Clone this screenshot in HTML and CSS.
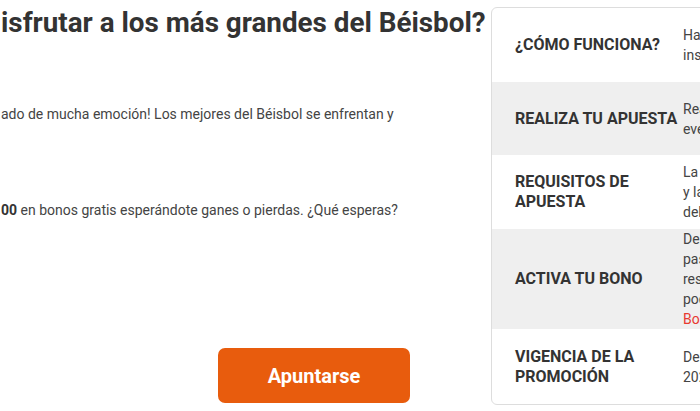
FILE: index.html
```html
<!DOCTYPE html>
<html lang="es">
<head>
<meta charset="utf-8">
<title>Béisbol</title>
<link rel="stylesheet" href="styles.css">
</head>
<body>
<div class="page">
  <section class="intro">
    <h1 class="title">isfrutar a los más grandes del Béisbol?</h1>
    <p class="lead">ado de mucha emoción! Los mejores del Béisbol se enfrentan y</p>
    <p class="lead second"><strong>00</strong> en bonos gratis esperándote ganes o pierdas. ¿Qué esperas?</p>
    <a class="cta" href="#">Apuntarse</a>
  </section>
  <aside class="card">
    <div class="row">
      <div class="label">¿CÓMO FUNCIONA?</div>
      <div class="desc">Haz clic en el botón Apuntarse y completa tu<br>inscripción a la promoción.</div>
    </div>
    <div class="row alt">
      <div class="label">REALIZA TU APUESTA</div>
      <div class="desc">Realiza tu apuesta en cualquier mercado del<br>evento seleccionado.</div>
    </div>
    <div class="row">
      <div class="label">REQUISITOS DE APUESTA</div>
      <div class="desc">La apuesta debe ser de cuota mínima 1.50<br>y la liquidación se realizará al finalizar<br>del evento.</div>
    </div>
    <div class="row alt tall">
      <div class="label">ACTIVA TU BONO</div>
      <div class="desc">Después de liquidada tu apuesta, en los próximos<br>pasos recibirás tu bono gratis sin importar el<br>resultado. Para activarlo en la sección,<br>podrás encontrarlo en tu perfil, en<br><a class="red" href="#">Bonos y Promociones</a>.</div>
    </div>
    <div class="row">
      <div class="label">VIGENCIA DE LA PROMOCIÓN</div>
      <div class="desc">Del 1 de octubre al 31 de octubre de<br>2023.</div>
    </div>
  </aside>
</div>
</body>
</html>
```
FILE: styles.css
```css
html, body {
  margin: 0;
  padding: 0;
  background: #ffffff;
  overflow: hidden;
}
body {
  font-family: Roboto, "Liberation Sans", sans-serif;
  color: #333333;
  width: 700px;
  height: 411px;
}
.page {
  display: flex;
  align-items: flex-start;
  width: 700px;
  height: 411px;
  overflow: hidden;
}
.intro {
  flex: 0 0 491px;
  min-width: 0;
  display: flex;
  flex-direction: column;
  align-items: flex-start;
  padding-left: 1px;
  box-sizing: border-box;
}
.title {
  margin: 5px 0 0 0;
  font-size: 27.8px;
  line-height: 36px;
  font-weight: 700;
  color: #333333;
  white-space: nowrap;
}
.lead {
  margin: 63px 0 0 0;
  font-size: 14px;
  line-height: 20px;
  color: #444444;
  white-space: nowrap;
}
.lead.second {
  margin-top: 76px;
}
.lead strong {
  font-weight: 700;
  color: #333333;
}
.cta {
  margin: 128px 0 0 217px;
  width: 192px;
  height: 55px;
  border-radius: 7px;
  background: #e85c0d;
  color: #ffffff;
  font-size: 20px;
  font-weight: 700;
  text-decoration: none;
  display: flex;
  align-items: center;
  justify-content: center;
}
.card {
  flex: 0 0 auto;
  width: 420px;
  margin-top: 7px;
  border: 1px solid #dddddd;
  border-radius: 6px;
  overflow: hidden;
  background: #ffffff;
}
.row {
  display: flex;
  align-items: center;
  min-height: 74px;
}
.row.alt {
  background: #efefef;
  min-height: 73px;
}
.row.tall {
  min-height: 100px;
}
.row:last-child {
  min-height: 75px;
}
.label {
  flex: 0 0 191px;
  box-sizing: border-box;
  padding-left: 23px;
  padding-right: 4px;
  font-size: 16px;
  line-height: 20px;
  font-weight: 700;
  color: #333333;
}
.desc {
  flex: 1 1 auto;
  font-size: 14px;
  line-height: 20px;
  color: #444444;
  white-space: nowrap;
}
.red {
  color: #e8392f;
  text-decoration: none;
}
```
